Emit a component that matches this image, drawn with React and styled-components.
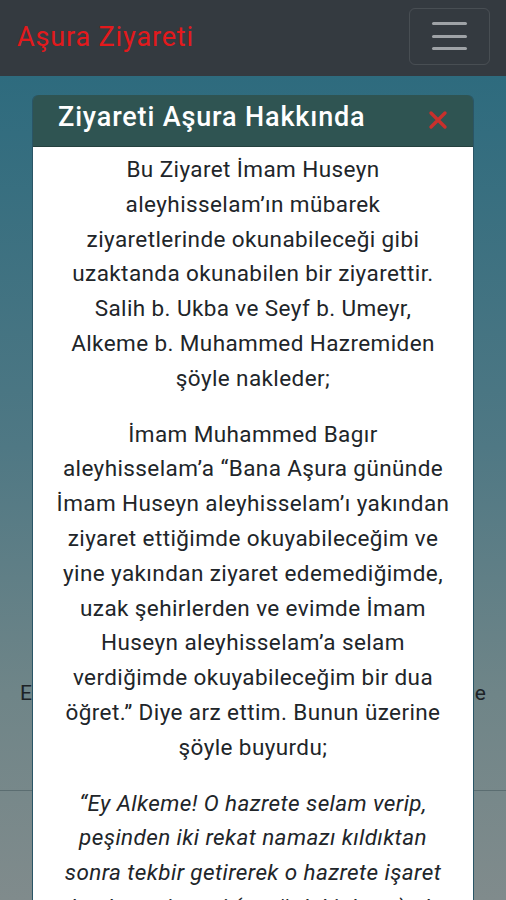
import styled, { createGlobalStyle } from "styled-components";

const GlobalStyle = createGlobalStyle`
  html, body {
    margin: 0;
    padding: 0;
    font-family: Roboto, "Noto Sans", sans-serif;
    overflow: hidden;
  }
`;

// lines are kept as in the app so the wrapping stays the same
const paragraphs = [
  [
    "Bu Ziyaret İmam Huseyn",
    "aleyhisselam’ın mübarek",
    "ziyaretlerinde okunabileceği gibi",
    "uzaktanda okunabilen bir ziyarettir.",
    "Salih b. Ukba ve Seyf b. Umeyr,",
    "Alkeme b. Muhammed Hazremiden",
    "şöyle nakleder;",
  ],
  [
    "İmam Muhammed Bagır",
    "aleyhisselam’a “Bana Aşura gününde",
    "İmam Huseyn aleyhisselam’ı yakından",
    "ziyaret ettiğimde okuyabileceğim ve",
    "yine yakından ziyaret edemediğimde,",
    "uzak şehirlerden ve evimde İmam",
    "Huseyn aleyhisselam’a selam",
    "verdiğimde okuyabileceğim bir dua",
    "öğret.” Diye arz ettim. Bunun üzerine",
    "şöyle buyurdu;",
  ],
];

const quote = [
  "“Ey Alkeme! O hazrete selam verip,",
  "peşinden iki rekat namazı kıldıktan",
  "sonra tekbir getirerek o hazrete işaret",
  "ederek şu ziyareti (aşağıdaki duayı) oku.",
];

function Lines({ lines }) {
  return lines.map((l, i) => (
    <span key={l}>
      {l}
      {i < lines.length - 1 && <br />}
    </span>
  ));
}

export default function App() {
  return (
    <Page>
      <GlobalStyle />
      <Navbar>
        <Brand>Aşura Ziyareti</Brand>
        <Toggler aria-label="menu">
          <Bar />
          <Bar />
          <Bar />
        </Toggler>
      </Navbar>
      <Main>
        <BackText>Ehlibeyt aşıkları Aşura günü bu duayı okur ve dinle</BackText>
        <Divider />
      </Main>
      <Modal>
        <ModalHeader>
          <ModalTitle>Ziyareti Aşura Hakkında</ModalTitle>
          <Close aria-label="kapat">
            <svg width="20" height="20" viewBox="0 0 20 20">
              <path
                d="M3 3 L17 17 M17 3 L3 17"
                stroke="#c9302c"
                strokeWidth="3.4"
                strokeLinecap="round"
              />
            </svg>
          </Close>
        </ModalHeader>
        <ModalBody>
          {paragraphs.map((p) => (
            <Text key={p[0]}>
              <Lines lines={p} />
            </Text>
          ))}
          <Text italic>
            <Lines lines={quote} />
          </Text>
        </ModalBody>
      </Modal>
    </Page>
  );
}

const Page = styled.div`
  position: relative;
  width: 100%;
  height: 900px;
  display: flex;
  flex-direction: column;
  overflow: hidden;
`;

const Navbar = styled.nav`
  height: 76px;
  flex-shrink: 0;
  background: #343a40;
  display: flex;
  align-items: center;
  justify-content: space-between;
  padding: 0 16px 0 17px;
`;

const Brand = styled.span`
  color: #e3191c;
  font-size: 27px;
  letter-spacing: 0.85px;
  margin-top: -2px;
`;

const Toggler = styled.button`
  width: 81px;
  height: 57px;
  margin-top: -4px;
  background: transparent;
  border: 1px solid rgba(255, 255, 255, 0.1);
  border-radius: 6px;
  display: flex;
  flex-direction: column;
  align-items: center;
  justify-content: center;
  gap: 9.5px;
  padding: 0;
`;

const Bar = styled.span`
  display: block;
  width: 35px;
  height: 3px;
  border-radius: 2px;
  background: #9ea2a6;
`;

const Main = styled.main`
  flex: 1;
  background: linear-gradient(180deg, #2e6b7e 0%, #4f7884 45%, #6f8588 75%, #808b8c 100%);
  display: flex;
  flex-direction: column;
  padding-top: 602px;
`;

const BackText = styled.p`
  margin: 0;
  padding: 0 19px 0 20px;
  height: 30px;
  overflow: hidden;
  font-size: 21px;
  line-height: 30px;
  color: #1d2226;
  white-space: nowrap;
  word-spacing: 0.35px;
`;

const Divider = styled.div`
  margin-top: 82px;
  height: 1px;
  background: rgba(40, 60, 66, 0.35);
`;

const Modal = styled.section`
  position: absolute;
  top: 95px;
  left: 33px;
  width: 440px;
  bottom: -40px;
  display: flex;
  flex-direction: column;
  border-radius: 6px 6px 0 0;
  overflow: hidden;
  box-shadow: -1px 0 0 #2a5566, 1px 0 0 #2a5566;
`;

const ModalHeader = styled.header`
  height: 51px;
  flex-shrink: 0;
  background: #2f5452;
  display: flex;
  align-items: center;
  justify-content: space-between;
  padding: 0 25px 0 25px;
  border-bottom: 1px solid #25413f;
`;

const ModalTitle = styled.h2`
  margin: -8px 0 0;
  color: #ffffff;
  font-size: 27px;
  font-weight: 500;
  letter-spacing: 0.85px;
`;

const Close = styled.button`
  background: none;
  border: 0;
  padding: 0;
  display: flex;
  margin-top: -2px;
`;

const ModalBody = styled.div`
  flex: 1;
  background: #ffffff;
  padding: 5px 10px 0;
  text-align: center;
  color: #212529;
`;

const Text = styled.p`
  margin: 0 0 21px;
  font-size: 22.5px;
  line-height: 34.8px;
  letter-spacing: 0.4px;
  white-space: nowrap;
  font-style: ${(p) => (p.italic ? "italic" : "normal")};
`;
